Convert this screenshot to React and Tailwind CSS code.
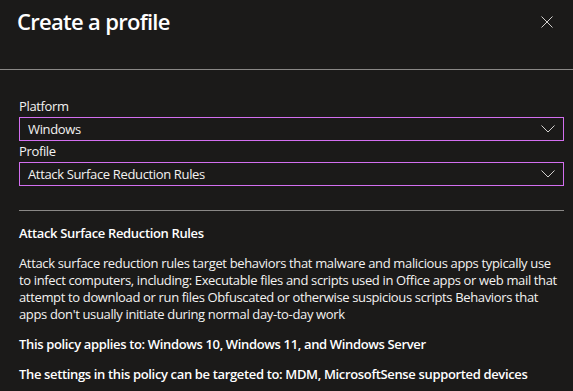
import React from "react";

const font = { fontFamily: '"Open Sans", "Noto Sans", sans-serif' };

function Chevron() {
  return (
    <svg width="14" height="8" viewBox="0 0 14 8" className="shrink-0">
      <path d="M0.5 0.5 L7 7 L13.5 0.5" fill="none" stroke="#d2d0ce" strokeWidth="1" />
    </svg>
  );
}

function Select({ value }) {
  return (
    <div className="flex h-[24px] items-center justify-between border border-[#d36ff0] pl-[8px] pr-[8px] text-[13px] tracking-[-0.35px] text-[#f3f2f1]">
      <span className="leading-none">{value}</span>
      <Chevron />
    </div>
  );
}

export default function App() {
  return (
    <div className="h-[391px] w-[573px] overflow-hidden bg-[#1b1a19] text-white" style={font}>
      <div className="flex h-[69px] items-start justify-between pl-[17px] pr-[20px]">
        <h1 className="mt-[6px] text-[22px] font-semibold leading-[30px] tracking-[-0.7px] text-white">Create a profile</h1>
        <svg width="12" height="12" viewBox="0 0 12 12" className="mt-[16px]">
          <path d="M0.5 0.5 L11.5 11.5 M11.5 0.5 L0.5 11.5" stroke="#d2d0ce" strokeWidth="1" fill="none" />
        </svg>
      </div>
      <div className="h-px bg-[#8a8886]" />
      <div className="pl-[19px] pr-[9px] text-[13px] tracking-[-0.35px]">
        <div className="mt-[26px] leading-[20px] text-[#f3f2f1]">Platform</div>
        <div className="mt-px">
          <Select value="Windows" />
        </div>
        <div className="leading-[21px] text-[#f3f2f1]">Profile</div>
        <div>
          <Select value="Attack Surface Reduction Rules" />
        </div>
        <div className="mt-[24px] h-px bg-[#8a8886]" />
        <div className="mt-[14px] font-semibold leading-[17px]">Attack Surface Reduction Rules</div>
        <p className="mt-[13px] leading-[17px] text-[#f3f2f1]">
          Attack surface reduction rules target behaviors that malware and malicious apps typically use to infect computers, including: Executable files and scripts used in Office apps or web mail that attempt to download or run files Obfuscated or otherwise suspicious scripts Behaviors that apps don't usually initiate during normal day-to-day work
        </p>
        <p className="mt-[13px] font-semibold leading-[17px]">This policy applies to: Windows 10, Windows 11, and Windows Server</p>
        <p className="mt-[13px] font-semibold leading-[17px]">The settings in this policy can be targeted to: MDM, MicrosoftSense supported devices</p>
      </div>
    </div>
  );
}
